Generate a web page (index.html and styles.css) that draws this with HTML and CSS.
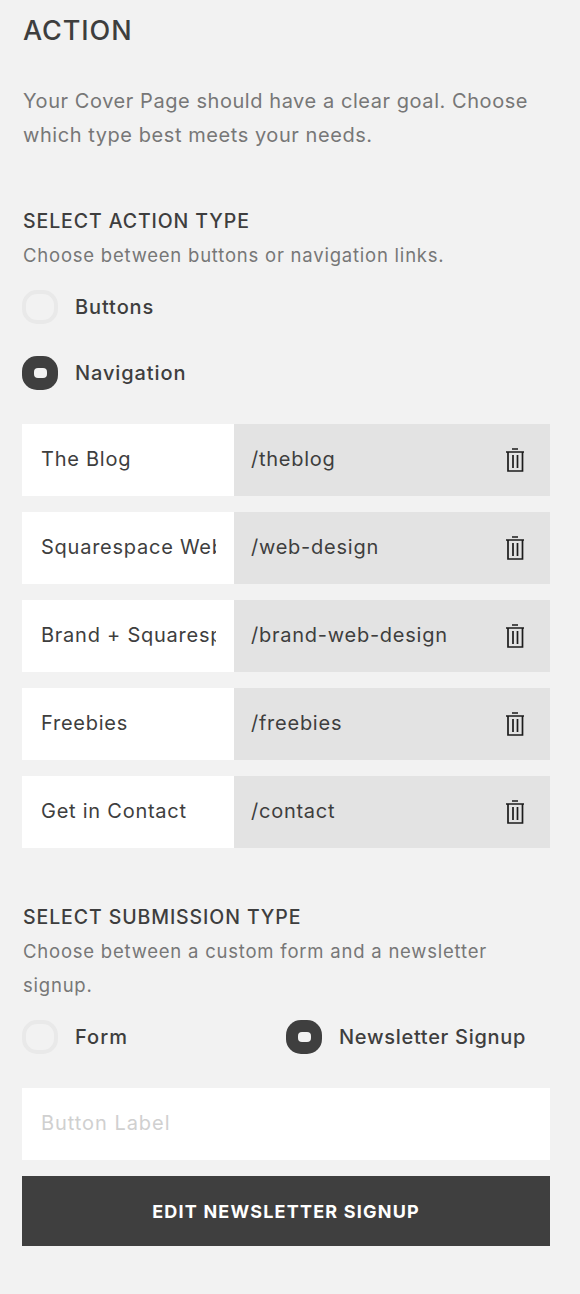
FILE: index.html
```html
<!DOCTYPE html>
<html lang="en">
<head>
    <meta charset="UTF-8">
    <meta name="viewport" content="width=device-width, initial-scale=1.0">
    <title>Action</title>
    <link rel="stylesheet" href="styles.css">
</head>
<body>
    <svg class="sprite" width="0" height="0">
        <symbol id="trash" viewBox="0 0 18 24">
            <path d="M6 1h6M0 4h18M2 4v19h14.5V4M7 7v13M11.5 7v13" fill="none" stroke="#1c1c1c" stroke-width="1.7"/>
        </symbol>
    </svg>

    <h1 class="titulo">ACTION</h1>
    <p class="intro">Your Cover Page should have a clear goal. Choose which type best meets your needs.</p>

    <h2 class="seccion">SELECT ACTION TYPE</h2>
    <p class="ayuda">Choose between buttons or navigation links.</p>
    <div class="opcion"><span class="radio"></span>Buttons</div>
    <div class="opcion"><span class="radio activo"></span>Navigation</div>

    <div class="lista">
        <div class="fila">
            <input class="nombre" type="text" value="The Blog">
            <div class="ruta"><input type="text" value="/theblog"><svg class="papelera"><use href="#trash"/></svg></div>
        </div>
        <div class="fila">
            <input class="nombre" type="text" value="Squarespace Web Design">
            <div class="ruta"><input type="text" value="/web-design"><svg class="papelera"><use href="#trash"/></svg></div>
        </div>
        <div class="fila">
            <input class="nombre" type="text" value="Brand + Squarespace">
            <div class="ruta"><input type="text" value="/brand-web-design"><svg class="papelera"><use href="#trash"/></svg></div>
        </div>
        <div class="fila">
            <input class="nombre" type="text" value="Freebies">
            <div class="ruta"><input type="text" value="/freebies"><svg class="papelera"><use href="#trash"/></svg></div>
        </div>
        <div class="fila">
            <input class="nombre" type="text" value="Get in Contact">
            <div class="ruta"><input type="text" value="/contact"><svg class="papelera"><use href="#trash"/></svg></div>
        </div>
    </div>

    <h2 class="seccion segunda">SELECT SUBMISSION TYPE</h2>
    <p class="ayuda">Choose between a custom form and a newsletter signup.</p>
    <div class="opciones">
        <div class="opcion"><span class="radio"></span>Form</div>
        <div class="opcion"><span class="radio activo"></span>Newsletter Signup</div>
    </div>

    <input class="campo" type="text" placeholder="Button Label">
    <button class="boton">EDIT NEWSLETTER SIGNUP</button>
</body>
</html>
```
FILE: styles.css
```css
* {
    margin: 0;
    padding: 0;
    box-sizing: border-box;
    font-family: 'Inter', sans-serif;
}
body {
    background-color: #f2f2f2;
    color: #3e3e3e;
    width: 580px;
    height: 1294px;
    padding: 15px 30px 0 22px;
    overflow: hidden;
}
input {
    border: none;
    outline: none;
    background: none;
    font-size: 20px;
    letter-spacing: 0.75px;
    color: #3e3e3e;
    padding-bottom: 2px;
}
.sprite {
    position: absolute;
}
.titulo {
    font-size: 27px;
    line-height: 32px;
    font-weight: 500;
    letter-spacing: 0.9px;
    padding-left: 1px;
}
.intro {
    margin-top: 37px;
    padding-left: 1px;
    font-size: 20px;
    line-height: 34px;
    color: #777;
    letter-spacing: 0.56px;
}
.seccion {
    margin-top: 57px;
    padding-left: 1px;
    font-size: 19.5px;
    line-height: 24px;
    font-weight: 500;
    letter-spacing: 0.9px;
}
.segunda {
    margin-top: 57px;
}
.ayuda {
    margin-top: 5px;
    padding-left: 1px;
    font-size: 18.5px;
    line-height: 34px;
    color: #777;
    letter-spacing: 0.78px;
}
.opcion {
    display: flex;
    align-items: center;
    gap: 17px;
    height: 34px;
    font-size: 20px;
    font-weight: 500;
    letter-spacing: 0.9px;
    margin-top: 18px;
}
.opcion + .opcion {
    margin-top: 32px;
}
.radio {
    width: 36px;
    height: 34px;
    border: 4px solid #e9e9e9;
    border-radius: 15px;
}
.radio.activo {
    display: flex;
    align-items: center;
    justify-content: center;
    background-color: #3f3f3f;
    border: none;
}
.radio.activo::after {
    content: "";
    width: 13px;
    height: 10px;
    background-color: #f2f2f2;
    border-radius: 4px;
}
.lista {
    margin-top: 34px;
    display: flex;
    flex-direction: column;
    gap: 16px;
}
.fila {
    display: flex;
    height: 72px;
}
.nombre {
    width: 212px;
    background-color: #fff;
    padding: 0 18px 2px 19px;
}
.ruta {
    flex: 1;
    background-color: #e3e3e3;
    padding: 0 26px 0 17px;
    display: flex;
    align-items: center;
    justify-content: space-between;
}
.ruta input {
    width: 230px;
}
.papelera {
    width: 18px;
    height: 24px;
}
.opciones {
    display: flex;
    margin-top: 18px;
}
.opciones .opcion {
    margin-top: 0;
    letter-spacing: 0.7px;
}
.opciones .opcion:first-child {
    width: 264px;
    letter-spacing: 1px;
}
.campo {
    display: block;
    width: 100%;
    margin-top: 34px;
    height: 72px;
    background-color: #fff;
    padding-left: 19px;
    letter-spacing: 0.95px;
}
.campo::placeholder {
    color: #d0d0d0;
}
.boton {
    display: block;
    width: 100%;
    height: 70px;
    margin-top: 16px;
    background-color: #3f3f3f;
    color: #fff;
    border: none;
    font-size: 18px;
    font-weight: 700;
    letter-spacing: 1.2px;
}
```
